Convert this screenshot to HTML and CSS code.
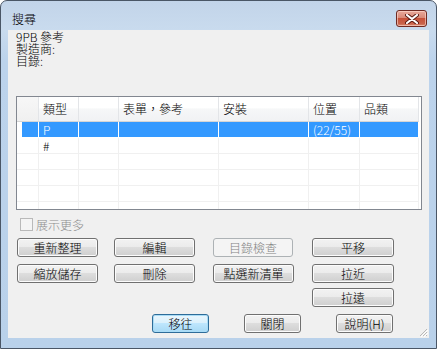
FILE: index.html
```html
<!DOCTYPE html>
<html lang="zh-Hant">
<head>
    <meta charset="UTF-8">
    <title>搜尋</title>
    <link rel="stylesheet" href="styles.css">
</head>
<body>

<div class="window">
    <!-- Title bar -->
    <div class="titlebar">
        <span class="title">搜尋</span>
        <button class="close">
            <svg width="14" height="10" viewBox="0 0 14 10">
                <path d="M2 1 L12 9 M12 1 L2 9" stroke="#5a1a12" stroke-width="4" stroke-linecap="round"/>
                <path d="M2 1 L12 9 M12 1 L2 9" stroke="#fff" stroke-width="2.2" stroke-linecap="round"/>
            </svg>
        </button>
    </div>

    <div class="client">
        <div class="info">
            <div>9PB 參考</div>
            <div>製造商:</div>
            <div>目錄:</div>
        </div>

        <!-- Result list -->
        <div class="list">
            <div class="row head">
                <div class="cell"></div>
                <div class="cell">類型</div>
                <div class="cell"></div>
                <div class="cell">表單，參考</div>
                <div class="cell">安裝</div>
                <div class="cell">位置</div>
                <div class="cell">品類</div>
            </div>
            <div class="row sel">
                <div class="cell"></div>
                <div class="cell">P</div>
                <div class="cell"></div>
                <div class="cell"></div>
                <div class="cell"></div>
                <div class="cell">(22/55)</div>
                <div class="cell"></div>
            </div>
            <div class="row">
                <div class="cell"></div>
                <div class="cell">#</div>
                <div class="cell"></div>
                <div class="cell"></div>
                <div class="cell"></div>
                <div class="cell"></div>
                <div class="cell"></div>
            </div>
            <div class="row">
                <div class="cell"></div><div class="cell"></div><div class="cell"></div><div class="cell"></div><div class="cell"></div><div class="cell"></div><div class="cell"></div>
            </div>
            <div class="row">
                <div class="cell"></div><div class="cell"></div><div class="cell"></div><div class="cell"></div><div class="cell"></div><div class="cell"></div><div class="cell"></div>
            </div>
            <div class="row">
                <div class="cell"></div><div class="cell"></div><div class="cell"></div><div class="cell"></div><div class="cell"></div><div class="cell"></div><div class="cell"></div>
            </div>
            <div class="row">
                <div class="cell"></div><div class="cell"></div><div class="cell"></div><div class="cell"></div><div class="cell"></div><div class="cell"></div><div class="cell"></div>
            </div>
        </div>

        <label class="more">
            <span class="check"></span>
            <span>展示更多</span>
        </label>

        <!-- Action buttons -->
        <div class="actions">
            <div class="btn-row">
                <button class="btn">重新整理</button>
                <button class="btn">編輯</button>
                <button class="btn" disabled>目錄檢查</button>
                <button class="btn wide">平移</button>
            </div>
            <div class="btn-row">
                <button class="btn">縮放儲存</button>
                <button class="btn">刪除</button>
                <button class="btn">點選新清單</button>
                <button class="btn wide">拉近</button>
            </div>
            <div class="btn-row last">
                <span class="spacer"></span>
                <span class="spacer"></span>
                <span class="spacer"></span>
                <button class="btn wide">拉遠</button>
            </div>
        </div>

        <div class="footer">
            <button class="btn small default">移往</button>
            <button class="btn small">關閉</button>
            <button class="btn small">說明(H)</button>
        </div>

        <svg class="grip" width="10" height="10" viewBox="0 0 10 10">
            <path d="M9 2 L2 9 M9 5 L5 9 M9 8 L8 9" stroke="#b8b8b8" stroke-width="1"/>
            <path d="M10 3 L3 10 M10 6 L6 10" stroke="#fff" stroke-width="1"/>
        </svg>
    </div>
</div>

</body>
</html>
```

FILE: styles.css
```css
body {
    margin: 0;
    padding: 0;
    background-color: #fff;
    font-family: "Noto Sans CJK TC", "DejaVu Sans", sans-serif;
    font-size: 12px;
    font-weight: 300;
}

/* Window frame */
.window {
    width: 437px;
    height: 349px;
    box-sizing: border-box;
    border: 1px solid #4a5666;
    border-radius: 7px 7px 0 0;
    background: linear-gradient(#c2d4e9, #c9dbee 29px, #bcd3ec 60px, #b9d1ea);
    overflow: hidden;
    position: relative;
}

.titlebar {
    height: 29px;
    display: flex;
    align-items: flex-start;
    justify-content: space-between;
}

.title {
    margin: 10px 0 0 11px;
    line-height: 16px;
    color: #000;
}

.close {
    width: 31px;
    height: 17px;
    margin: 9px 9px 0 0;
    padding: 0;
    border: 1px solid #6f2a22;
    border-radius: 3px;
    background: linear-gradient(#e9a99b, #d98a78 45%, #c75139 50%, #c9644c 85%, #dc8f75);
    box-shadow: inset 0 0 0 1px rgba(255, 220, 210, 0.6);
    display: flex;
    align-items: center;
    justify-content: center;
}

/* Client area */
.client {
    margin: 0 7px;
    height: 308px;
    background-color: #f0f0f0;
    padding: 1px 8px 0;
    box-sizing: border-box;
    position: relative;
}

.info {
    line-height: 12px;
    color: #000;
}

/* List view */
.list {
    margin-top: 29px;
    width: 406px;
    height: 114px;
    box-sizing: border-box;
    border: 1px solid #828790;
    background-color: #fff;
    overflow: hidden;
}

.row {
    display: grid;
    grid-template-columns: 22px 40px 40px 100px 90px 51px 1fr;
    height: 16px;
}

.cell {
    box-sizing: border-box;
    border-right: 1px solid #f0f0f0;
    border-bottom: 1px solid #f0f0f0;
    padding-left: 4px;
    line-height: 15px;
    white-space: nowrap;
    overflow: hidden;
}

.cell:last-child {
    margin-right: 2px;
}

.head {
    height: 25px;
}

.head .cell {
    background: linear-gradient(#ffffff, #ffffff 45%, #f6f7f8 50%, #f1f2f4);
    border-right: 1px solid #e3e5e8;
    border-bottom: 1px solid #d5d5d5;
    line-height: 24px;
}

.head .cell:first-child {
    background: linear-gradient(#f7f7f7, #f0f0f0);
}

.sel .cell {
    background-color: #3399ff;
    color: #fff;
    border-right-color: #fff;
    border-bottom-color: #fff;
}

.sel .cell:first-child {
    background: linear-gradient(to right, #fff 5px, #3399ff 5px);
}

/* Checkbox */
.more {
    display: flex;
    align-items: center;
    margin: 8px 0 0 4px;
    height: 13px;
    color: #8d8d8d;
    line-height: 13px;
}

.check {
    width: 13px;
    height: 13px;
    box-sizing: border-box;
    border: 1px solid #b9b9b9;
    background-color: #f4f4f4;
    margin-right: 3px;
}

/* Buttons */
.actions {
    margin-top: 7px;
    margin-left: 1px;
}

.btn-row {
    display: grid;
    grid-template-columns: 97px 99px 99px 82px;
    height: 19px;
    margin-bottom: 7px;
}

.btn-row:nth-child(2) {
    margin-bottom: 5px;
}

.btn {
    width: 81px;
    height: 19px;
    padding: 0;
    box-sizing: border-box;
    border: 1px solid #707070;
    border-radius: 3px;
    background: linear-gradient(#f2f2f2, #ebebeb 50%, #dddddd 50%, #cfcfcf);
    box-shadow: inset 0 0 0 1px #fcfcfc;
    font-family: "Noto Sans CJK TC", "DejaVu Sans", sans-serif;
    font-size: 12px;
    font-weight: 300;
    line-height: 16px;
    color: #000;
}

.btn.wide {
    width: 82px;
}

.btn:disabled {
    width: 80px;
    border-color: #adb2b5;
    background: #f4f4f4;
    box-shadow: none;
    color: #838383;
}

.footer {
    display: flex;
    gap: 35px;
    margin: 2px 0 0 136px;
}

.btn.small {
    width: 57px;
}

.btn.default {
    border-color: #2e6c99;
    background: linear-gradient(#eaf6fd, #d9f0fc 50%, #bee6fd 50%, #a7d9f5);
    box-shadow: inset 0 0 0 1px #a9dcf6;
}

.grip {
    position: absolute;
    right: 1px;
    bottom: 1px;
}
```
